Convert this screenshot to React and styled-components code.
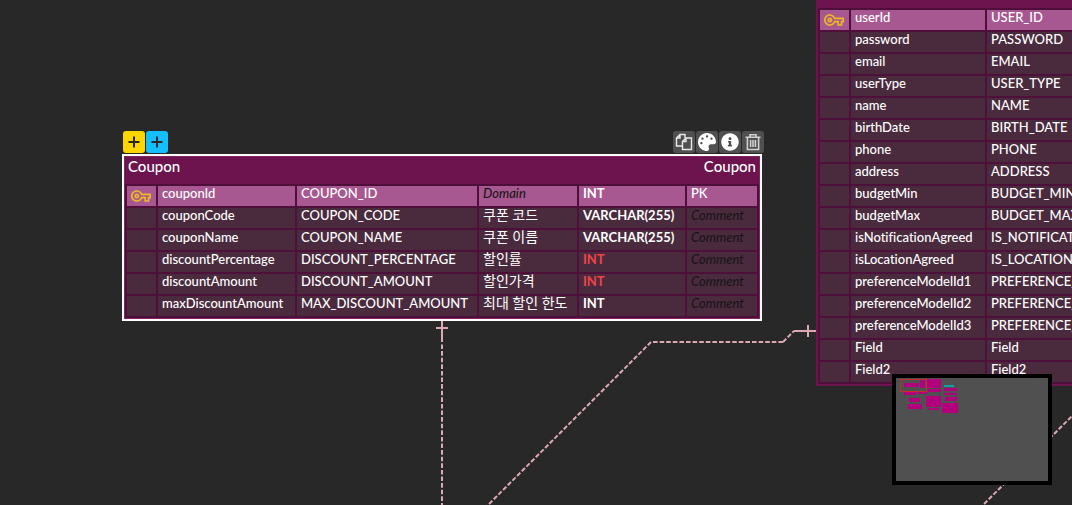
import React from "react";
import styled, { createGlobalStyle } from "styled-components";
import { FaPlus, FaPalette, FaInfoCircle } from "react-icons/fa";
import { MdOutlineVpnKey } from "react-icons/md";

const GlobalStyle = createGlobalStyle`
  * { box-sizing: border-box; }
  body {
    margin: 0;
    background: #282828;
    font-family: Lato, "Noto Sans CJK KR", sans-serif;
  }
`;

const Canvas = styled.main`
  position: relative;
  height: 100vh;
  overflow: hidden;
  background: #282828;
`;

const Links = styled.svg`
  position: absolute;
  inset: 0;
  width: 100%;
  height: 100%;
  fill: none;
  stroke: #dda8b1;
  stroke-width: 2;
`;

const Node = styled.section`
  position: absolute;
  left: ${(p) => p.$x}px;
  top: ${(p) => p.$y}px;
`;

const Card = styled.div`
  padding: ${(p) => (p.$selected ? "0 1px 1px" : "0")};
  background: #6d134d;
  border: 2px solid ${(p) => (p.$selected ? "#ffffff" : "#6d134d")};
  box-shadow: inset 0 0 0 1px ${(p) => (p.$selected ? "#84235f" : "#6d134d")};
`;

const Header = styled.header`
  display: flex;
  justify-content: space-between;
  height: 28px;
  padding: 0 3px;
  color: #ffffff;
  font-size: 15px;
  font-weight: 500;
  line-height: 20px;
`;

const Tools = styled.div`
  display: flex;
  justify-content: space-between;
  padding: 0 0 1px 1px;
  margin-right: -2px;
`;

const ToolGroup = styled.div`
  display: flex;
  gap: 1px;
`;

const ToolButton = styled.button`
  display: flex;
  align-items: center;
  justify-content: center;
  width: 22px;
  height: 22px;
  padding: 0;
  border: 0;
  border-radius: 3px;
  background: ${(p) => p.$bg || "#505050"};
  color: ${(p) => (p.$bg ? "#282828" : "#ffffff")};
`;

const Fields = styled.table`
  table-layout: fixed;
  width: ${(p) => p.$width}px;
  border-collapse: separate;
  border-spacing: 2px;
  background: #4f0f3b;
`;

const Row = styled.tr`
  height: 20px;
  background: ${(p) => (p.$key ? "#a85890" : "#4a2b3e")};
`;

const tones = { hint: "#1a1518", alert: "#ee4444" };

const Cell = styled.td`
  height: 20px;
  padding: 0 0 0 4px;
  color: ${(p) => tones[p.$tone] || "#ffffff"};
  font-size: ${(p) => (p.$tone === "korean" ? 14 : 13)}px;
  font-style: ${(p) => (p.$tone === "hint" ? "italic" : "normal")};
  font-weight: ${(p) => (p.$strong ? 700 : p.$tone === "korean" ? 400 : 500)};
  font-variant-ligatures: none;
  line-height: 14px;
  vertical-align: top;
  white-space: nowrap;
`;

const KeyIcon = styled(MdOutlineVpnKey)`
  display: block;
  width: 20px;
  height: 20px;
  color: #eeb822;
`;

const Minimap = styled.aside`
  position: absolute;
  right: 20px;
  bottom: 20px;
  width: 160px;
  height: 111px;
  border: 4px solid #000000;
  background: #505050;

  svg {
    display: block;
  }
`;

const PlusIcon = () => (
  <svg width="14" height="14" viewBox="0 0 14 14" fill="none" stroke="currentColor" strokeWidth="2">
    <path d="M7 1.5v11M1.5 7h11" />
  </svg>
);

const CopyIcon = () => (
  <svg width="18" height="18" viewBox="0 0 18 18" fill="none" stroke="#e8e8e8" strokeWidth="1.4">
    <path d="M7 13H1.5V5L5 1.5h5V5M5 1.5V5H1.5" />
    <path d="M7.5 8.5L11 5h5.5v11.5h-9zM11 5v3.5H7.5" />
  </svg>
);

const TrashIcon = () => (
  <svg width="18" height="18" viewBox="0 0 18 18" fill="none" stroke="#d0d0d0" strokeWidth="1.6">
    <path d="M1.5 4.2h15M6 4V1.7h6V4M3.4 4.5v12h11.2v-12M6.6 7v7M9 7v7M11.4 7v7" />
  </svg>
);

const couponRows = [
  ["couponId", "COUPON_ID", "", "INT", "PK"],
  ["couponCode", "COUPON_CODE", "쿠폰 코드", "VARCHAR(255)", ""],
  ["couponName", "COUPON_NAME", "쿠폰 이름", "VARCHAR(255)", ""],
  ["discountPercentage", "DISCOUNT_PERCENTAGE", "할인률", "INT", "", true],
  ["discountAmount", "DISCOUNT_AMOUNT", "할인가격", "INT", "", true],
  ["maxDiscountAmount", "MAX_DISCOUNT_AMOUNT", "최대 할인 한도", "INT", ""],
];

const userRows = [
  ["userId", "USER_ID"],
  ["password", "PASSWORD"],
  ["email", "EMAIL"],
  ["userType", "USER_TYPE"],
  ["name", "NAME"],
  ["birthDate", "BIRTH_DATE"],
  ["phone", "PHONE"],
  ["address", "ADDRESS"],
  ["budgetMin", "BUDGET_MIN"],
  ["budgetMax", "BUDGET_MAX"],
  ["isNotificationAgreed", "IS_NOTIFICATION_AGREED"],
  ["isLocationAgreed", "IS_LOCATION_AGREED"],
  ["preferenceModelId1", "PREFERENCE_MODEL_ID1"],
  ["preferenceModelId2", "PREFERENCE_MODEL_ID2"],
  ["preferenceModelId3", "PREFERENCE_MODEL_ID3"],
  ["Field", "Field"],
  ["Field2", "Field2"],
];

const Columns = ({ widths }) => (
  <colgroup>
    {widths.map((w, i) => (
      <col key={i} width={w} />
    ))}
  </colgroup>
);

const KeyCell = ({ shown }) => <Cell>{shown && <KeyIcon aria-label="Primary key" />}</Cell>;

function CouponNode() {
  return (
    <Node $x={122} $y={131}>
      <Tools>
        <ToolGroup>
          <ToolButton $bg="#ffd700" aria-label="Add field"><PlusIcon /></ToolButton>
          <ToolButton $bg="#13bfff" aria-label="Add linked field"><PlusIcon /></ToolButton>
        </ToolGroup>
        <ToolGroup>
          <ToolButton aria-label="Copy table"><CopyIcon /></ToolButton>
          <ToolButton aria-label="Table color"><FaPalette size={18} /></ToolButton>
          <ToolButton aria-label="Table info"><FaInfoCircle size={18} /></ToolButton>
          <ToolButton aria-label="Delete table"><TrashIcon /></ToolButton>
        </ToolGroup>
      </Tools>
      <Card $selected>
        <Header><span>Coupon</span><span>Coupon</span></Header>
        <Fields $width={634}>
          <Columns widths={[29, 137, 180, 98, 106, 70]} />
          <tbody>
            {couponRows.map(([name, column, domain, type, comment, alert], i) => (
              <Row key={name} $key={i === 0}>
                <KeyCell shown={i === 0} />
                <Cell>{name}</Cell>
                <Cell>{column}</Cell>
                <Cell $tone={domain ? "korean" : "hint"}>{domain || "Domain"}</Cell>
                <Cell $strong $tone={alert ? "alert" : ""}>{type}</Cell>
                <Cell $tone={comment ? "" : "hint"}>{comment || "Comment"}</Cell>
              </Row>
            ))}
          </tbody>
        </Fields>
      </Card>
    </Node>
  );
}

function UserNode() {
  return (
    <Node $x={816} $y={-22}>
      <Card>
        <Header />
        <Fields $width={371}>
          <Columns widths={[29, 134, 200]} />
          <tbody>
            {userRows.map(([name, column], i) => (
              <Row key={name} $key={i === 0}>
                <KeyCell shown={i === 0} />
                <Cell>{name}</Cell>
                <Cell>{column}</Cell>
              </Row>
            ))}
          </tbody>
        </Fields>
      </Card>
    </Node>
  );
}

const miniTables = [
  [8, 5, 15, 4], [24, 2, 5, 8], [31, 1, 14, 9], [32, 11, 13, 3],
  [8, 14, 12, 3], [21, 14, 10, 2], [13, 20, 11, 4], [12, 26, 14, 5],
  [30, 18, 15, 11], [32, 30, 11, 2], [48, 10, 13, 3], [48, 15, 13, 2],
  [49, 19, 12, 4], [46, 25, 16, 10],
];

export default function App() {
  return (
    <>
      <GlobalStyle />
      <Canvas>
        <Links aria-hidden="true">
          <path d="M442 321v21M436 328h12M794 331h22M808 325v12" />
          <path d="M442 344.5V520M783 342H651L470 523M783 342l11-11M1090 398L970 518" strokeDasharray="4.6 2" />
        </Links>
        <CouponNode />
        <UserNode />
        <Minimap aria-label="Minimap">
          <svg width="152" height="103">
            <g fill="#b3007d">
              {miniTables.map(([x, y, w, h]) => (
                <rect key={`${x}-${y}`} x={x} y={y} width={w} height={h} />
              ))}
            </g>
            <rect x="48" y="7" width="10" height="2" fill="#13a0a8" />
            <rect x="4.5" y="1.5" width="26" height="12" fill="none" stroke="#c92a2a" />
          </svg>
        </Minimap>
      </Canvas>
    </>
  );
}
